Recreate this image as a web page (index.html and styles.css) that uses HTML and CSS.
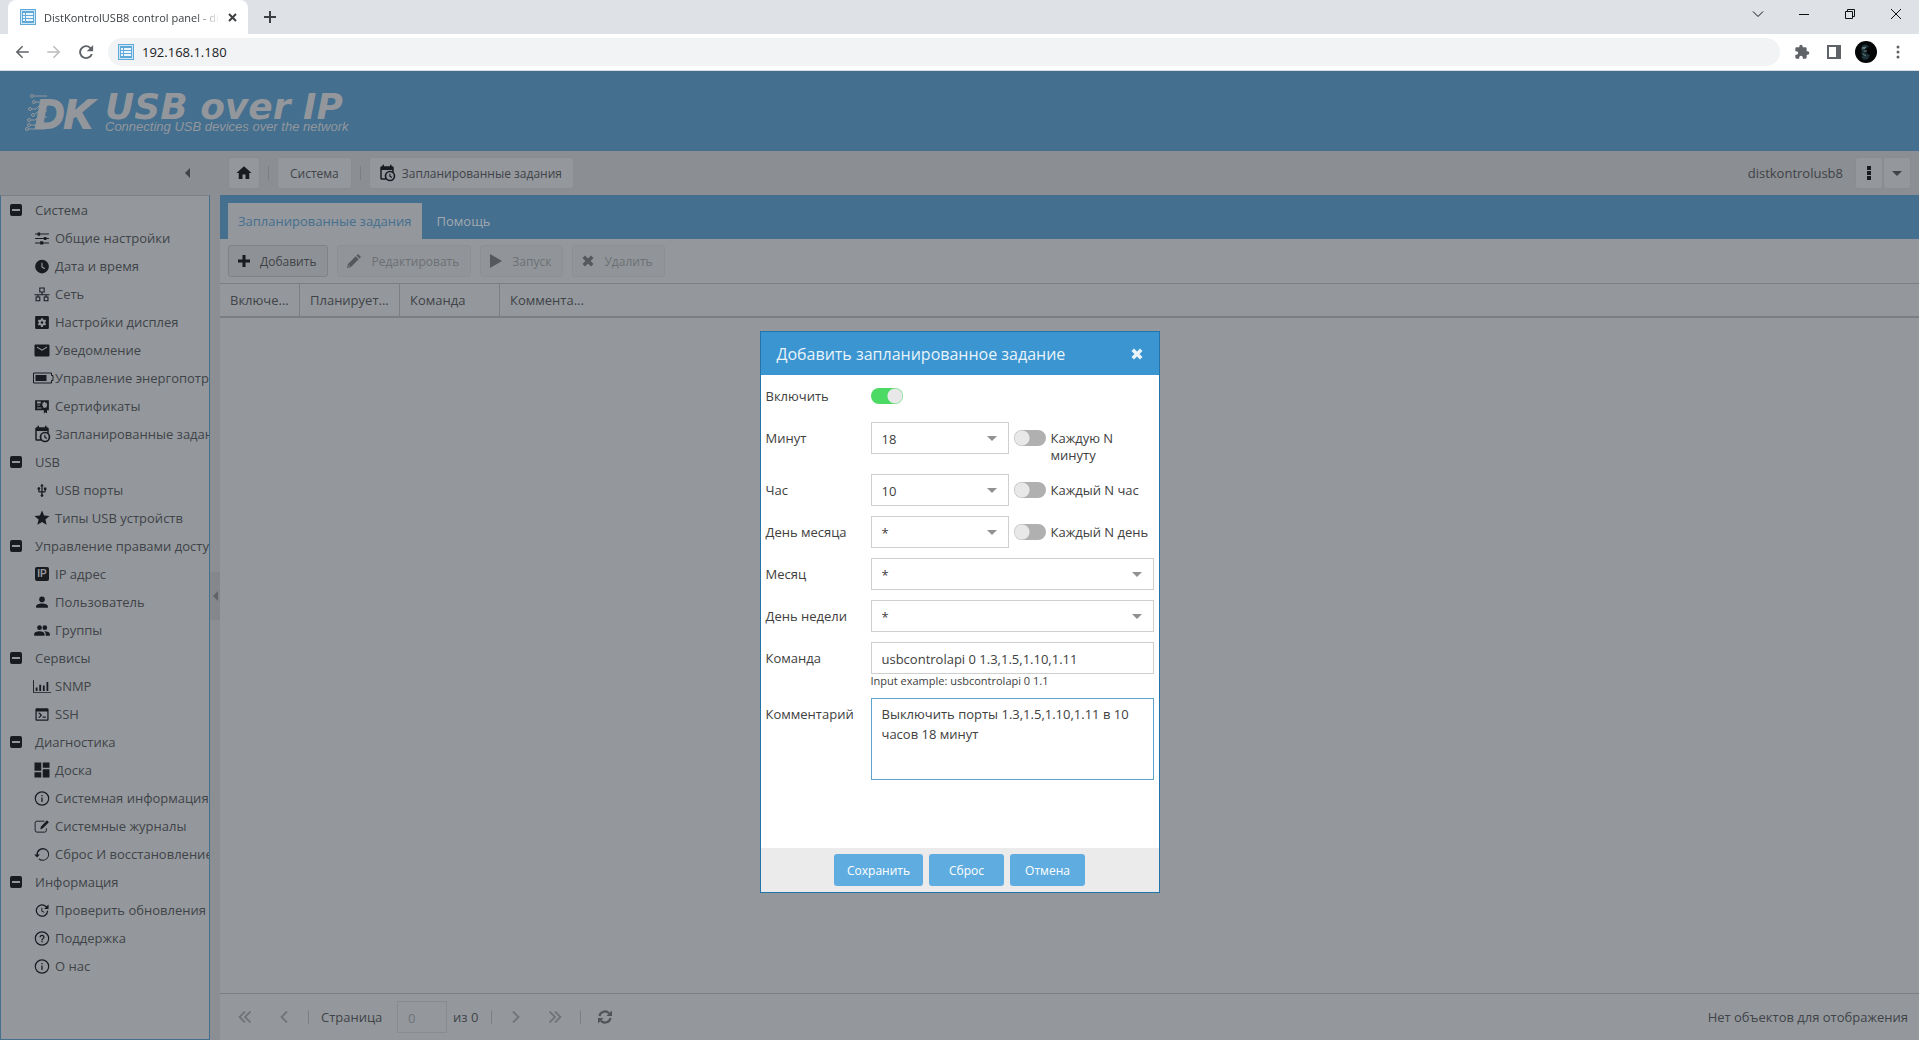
FILE: index.html
```html
<!DOCTYPE html>
<html lang="ru">
<head>
<meta charset="utf-8">
<meta name="viewport" content="width=device-width, initial-scale=1">
<title>DistKontrolUSB8 control panel</title>
<link rel="stylesheet" href="styles.css">
</head>
<body>
<svg class="sprite" aria-hidden="true">
  <symbol id="favicon" viewBox="0 0 16 16"><path fill="#5fa9da" d="M0 0h16v16H0z"/><path fill="#cfe6f6" d="M1 1h14v1H1zM1 14h14v1H1zM1 2h1v12H1zM14 2h1v12h-1z"/><path fill="#eaf5fc" d="M3 4h2v2H3zM6 4h7v2H6zM3 7h2v2H3zM6 7h7v2H6zM3 10h2v2H3zM6 10h7v2H6z"/></symbol>
  <symbol id="arrow-left" viewBox="0 0 24 24"><path d="M21 11v2H7.500l6 6-1.420 1.420L3.660 12l8.420-8.420L13.500 5l-6 6z"/></symbol>
  <symbol id="reload" viewBox="0 0 24 24"><path d="M18.500 5.500A9.200 9.200 0 1 0 21 14.500h-2.600A6.700 6.700 0 1 1 16.700 7.200L13 11h8.500V2.500z"/></symbol>
  <symbol id="puzzle" viewBox="0 0 24 24"><path d="M20.500 11H19V7a2 2 0 0 0-2-2h-4V3.500a2.500 2.500 0 0 0-5 0V5H4a2 2 0 0 0-2 2v3.800h1.500a2.700 2.700 0 0 1 0 5.400H2V20a2 2 0 0 0 2 2h3.800v-1.500a2.700 2.700 0 0 1 5.400 0V22H17a2 2 0 0 0 2-2v-4h1.500a2.500 2.500 0 0 0 0-5z"/></symbol>
  <symbol id="minus-box" viewBox="0 0 12 12"><path fill-rule="evenodd" d="M2 0h8a2 2 0 0 1 2 2v8a2 2 0 0 1-2 2H2a2 2 0 0 1-2-2V2a2 2 0 0 1 2-2zM2 5v2h8V5z"/></symbol>
  <symbol id="tune" viewBox="0 0 24 24"><path d="M1 4h22v1.600H1zM1 11.200h22v1.600H1zM1 18.400h22V20H1z"/><path d="M5 2.500h4v5H5zM15 9.500h4v5h-4zM9 16.500h5v5H9z"/></symbol>
  <symbol id="clock" viewBox="0 0 24 24"><path fill-rule="evenodd" d="M12 1a11 11 0 1 0 0 22 11 11 0 0 0 0-22zm4.200 15.200L11 13V6h1.800v6.100l4.200 2.500z"/></symbol>
  <symbol id="lan" viewBox="0 0 24 24"><path fill="none" stroke="currentColor" stroke-width="1.700" d="M8.500 1.500h7V8h-7zM2.500 16h6v6h-6zM15.500 16h6v6h-6zM12 8v4.500M0 12.500h24M5.500 12.500V16M18.500 12.500V16"/></symbol>
  <symbol id="display" viewBox="0 0 24 24"><path fill-rule="evenodd" d="M3 1.500h18a2 2 0 0 1 2 2v17a2 2 0 0 1-2 2H3a2 2 0 0 1-2-2v-17c0-1.100.9-2 2-2zm7.500 3.500-.4 2.200-1.300.7-2-.8-1.600 2.700 1.700 1.400v1.600l-1.700 1.400 1.600 2.700 2-.8 1.300.7.400 2.200h3l.4-2.200 1.300-.7 2 .8 1.600-2.700-1.700-1.400v-1.600l1.700-1.400-1.600-2.700-2 .8-1.300-.7-.4-2.200zM12 10a2 2 0 1 1 0 4 2 2 0 0 1 0-4z"/></symbol>
  <symbol id="mail" viewBox="0 0 24 24"><path fill-rule="evenodd" d="M2 2.500h20a2 2 0 0 1 2 2v15a2 2 0 0 1-2 2H2a2 2 0 0 1-2-2v-15c0-1.100.9-2 2-2zm2 3v2l8 5 8-5v-2l-8 5z"/></symbol>
  <symbol id="battery" viewBox="0 0 21 12"><path fill="none" stroke="currentColor" d="M.5 1h18v2.500h1.500v5h-1.500V11H.5z"/><path d="M2.500 3h11v6h-11z"/></symbol>
  <symbol id="cert" viewBox="0 0 24 24"><path fill-rule="evenodd" d="M1 2h22v16h-3v5l-2.500-2-2.500 2v-5H1zm3 2v3h6V4zm0 5v1.500h5V9zm0 4.500V15h7v-1.500zM16 4l-1 1.500h-2V8l-1 1.500 1.500 1.500V13.500H15l1 1 1.500-1H19.500v-2l1-2-1-1.500V6h-2z"/></symbol>
  <symbol id="calendar" viewBox="0 0 24 24"><path d="M15 13h1.500v2.820l2.440 1.410-.75 1.300L15 16.690zM19 8H5v11h4.670A7 7 0 0 1 19 9.670zM5 21a2 2 0 0 1-2-2V5c0-1.110.89-2 2-2h1V1h2v2h8V1h2v2h1a2 2 0 0 1 2 2v6.100A7 7 0 0 1 11.100 21zm11-9.850a4.850 4.850 0 1 0 0 9.700 4.850 4.850 0 0 0 0-9.700z"/></symbol>
  <symbol id="usb" viewBox="0 0 24 24"><path d="M15 7v4h1v2h-3V5h2l-3-4-3 4h2v8H8v-2.070a2.200 2.200 0 1 0-2 0V13a2 2 0 0 0 2 2h3v3.050a2.200 2.200 0 1 0 2 0V15h3a2 2 0 0 0 2-2v-2h1V7z"/></symbol>
  <symbol id="star" viewBox="0 0 24 24"><path d="M12 17.270 18.180 21l-1.640-7.030L22 9.240l-7.190-.62L12 2 9.190 8.620 2 9.240l5.450 4.730L5.820 21z"/></symbol>
  <symbol id="user" viewBox="0 0 24 24"><circle cx="12" cy="7" r="4.500"/><path d="M12 13.500c-5 0-9.500 1.800-9.500 4.500v2.500h19V18c0-2.700-4.500-4.500-9.500-4.500z"/></symbol>
  <symbol id="users" viewBox="0 0 24 24"><circle cx="8" cy="7.500" r="3.800"/><circle cx="16.500" cy="7.500" r="3.800"/><path d="M8 13c-4.500 0-8.500 1.600-8.500 4.200v3.300h16.500v-3.300C16 14.600 12 13 8 13zM16.500 13l-1.300.1c1.500.9 2.700 2.300 2.700 4.100v3.300h6.600v-3.300c0-2.600-4-4.200-8-4.200z"/></symbol>
  <symbol id="chart" viewBox="0 0 20 14"><path d="M1 0v13h19v1H0V0zM3 8h2v4H3zM7 5h2v7H7zM11 6h2v6h-2zM15 2h2v10h-2z"/></symbol>
  <symbol id="console" viewBox="0 0 24 24"><path d="M20.500 20V7h-17v13zm0-18a2 2 0 0 1 2 2v16a2 2 0 0 1-2 2h-17a2 2 0 0 1-2-2V4c0-1.110.9-2 2-2zm-7.500 15v-2h5v2zm-3.420-4L5.570 9H8.400l3.300 3.300a1 1 0 0 1 0 1.420L8.420 17H5.590z"/></symbol>
  <symbol id="board" viewBox="0 0 24 24"><path d="M13 2v7h9V2M13 22h9V11h-9M2 22h9v-7H2M2 13h9V2H2z"/></symbol>
  <symbol id="info" viewBox="0 0 24 24"><circle cx="12" cy="12" r="10.700" fill="none" stroke="currentColor" stroke-width="1.900"/><path d="M11 6.500h2v2h-2zM11 10.500h2v7h-2z"/></symbol>
  <symbol id="help" viewBox="0 0 24 24"><circle cx="12" cy="12" r="10.700" fill="none" stroke="currentColor" stroke-width="1.900"/><path d="M11 18h2v-2h-2zM12 6a4 4 0 0 0-4 4h2a2 2 0 1 1 4 0c0 2-3 1.750-3 5h2c0-2.250 3-2.500 3-5a4 4 0 0 0-4-4z"/></symbol>
  <symbol id="edit" viewBox="0 0 24 24"><path fill="none" stroke="currentColor" stroke-width="1.500" d="M16 3.500H4a3 3 0 0 0-3 3V18a3 3 0 0 0 3 3h12a3 3 0 0 0 3-3v-3"/><path d="m20 2 3 3-10 10-4 1.500L10.500 12z"/></symbol>
  <symbol id="restore" viewBox="0 0 24 24"><path d="M13.500 1.500A10.300 10.300 0 0 0 3.100 12H-.5l4.600 4.800L8.700 12H5.200a8.300 8.300 0 1 1 2.600 6.200l-1.400 1.500A10.300 10.300 0 1 0 13.500 1.500z"/></symbol>
  <symbol id="update" viewBox="0 0 24 24"><path d="M22.500 9.500h-7.200l2.700-2.700A8 8 0 1 0 20 12.500h2A10 10 0 1 1 19.300 5.300l3.200-3zM12.500 7.500v4.750L16 14.330l-.72 1.210L11 13V7.500z"/></symbol>
  <symbol id="home" viewBox="0 0 24 24"><path d="M10 20v-6h4v6h5v-8h3L12 3 2 12h3v8z"/></symbol>
  <symbol id="plus" viewBox="0 0 12 12"><path d="M4.500 0h3v4.500H12v3H7.500V12h-3V7.500H0v-3h4.500z"/></symbol>
  <symbol id="pencil" viewBox="0 0 14 14"><path fill-rule="evenodd" d="M11 0l3 3-1.500 1.500-3-3zM8.700 2.300l3 3L4 13l-4 1 1-4zM2 11l-.6 1.700L3.200 12.100z"/></symbol>
  <symbol id="play" viewBox="0 0 12 14"><path d="M0 0l12 7-12 7z"/></symbol>
  <symbol id="cross" viewBox="0 0 12 12"><path d="M3 .5 6 3.500l3-3L11.500 3l-3 3 3 3L9 11.500l-3-3-3 3L.5 9l3-3-3-3z"/></symbol>
  <symbol id="dots" viewBox="0 0 4 14"><path d="M0 0h4v4H0zM0 5h4v4H0zM0 10h4v4H0z"/></symbol>
  <symbol id="down" viewBox="0 0 10 5"><path d="M0 0h10L5 5z"/></symbol>
  <symbol id="left" viewBox="0 0 5 10"><path d="M5 0v10L0 5z"/></symbol>
  <symbol id="chev" viewBox="0 0 8 12"><path fill="none" stroke="currentColor" stroke-width="1.800" d="M7 .5 1.500 6 7 11.500"/></symbol>
  <symbol id="chev2" viewBox="0 0 13 12"><path fill="none" stroke="currentColor" stroke-width="1.800" d="M7 .5 1.500 6 7 11.500M12.500.5 7 6l5.500 5.500"/></symbol>
  <symbol id="sync" viewBox="0 0 14 14"><path fill="none" stroke="currentColor" stroke-width="2.200" d="M1.500 6A5.500 5.500 0 0 1 11 3.300M12.500 8A5.500 5.500 0 0 1 3 10.700"/><path d="M14 .5V6H8.500zM0 13.500V8h5.500z"/></symbol>
</svg>

<div class="browser">
  <div class="tabstrip">
    <div class="browser-tab">
      <svg class="i16"><use href="#favicon"/></svg>
      <span class="browser-title">DistKontrolUSB8 control panel - di</span>
      <button class="plain" aria-label="Close tab"><svg class="i9" viewBox="0 0 9 9"><path d="M1 1l7 7M8 1 1 8" fill="none" stroke="#3c4043" stroke-width="2"/></svg></button>
    </div>
    <button class="plain new-tab" aria-label="New tab"><svg class="i12" viewBox="0 0 12 12"><path d="M6 0v12M0 6h12" stroke="#3c4043" stroke-width="2"/></svg></button>
    <div class="window-controls">
      <button class="plain" aria-label="Search tabs"><svg viewBox="0 0 10 10"><path d="M0 2.500l5 5 5-5"/></svg></button>
      <button class="plain" aria-label="Minimize"><svg viewBox="0 0 10 10"><path d="M0 5.500h10"/></svg></button>
      <button class="plain" aria-label="Restore"><svg viewBox="0 0 10 10"><path d="M.5 2.500h7v7h-7zM2.500 2V.5h7v7H8"/></svg></button>
      <button class="plain" aria-label="Close"><svg viewBox="0 0 10 10"><path d="M0 0l10 10M10 0 0 10"/></svg></button>
    </div>
  </div>
  <div class="navbar">
    <button class="plain nav" aria-label="Back"><svg class="i18"><use href="#arrow-left"/></svg></button>
    <button class="plain nav forward" aria-label="Forward"><svg class="i18"><use href="#arrow-left"/></svg></button>
    <button class="plain nav" aria-label="Reload"><svg class="i18"><use href="#reload"/></svg></button>
    <div class="omnibox"><svg class="i16"><use href="#favicon"/></svg><input aria-label="Address" value="192.168.1.180"></div>
    <button class="plain ext" aria-label="Extensions"><svg class="i16"><use href="#puzzle"/></svg></button>
    <button class="plain ext" aria-label="Side panel"><svg class="i14" viewBox="0 0 14 14"><path fill-rule="evenodd" d="M0 0h14v14H0zm2 2v10h7V2z"/></svg></button>
    <button class="plain ext" aria-label="Profile"><svg class="i22" viewBox="0 0 22 22"><circle cx="11" cy="11" r="11" fill="#050607"/><path d="M7 5c2-2 5-2 7 1l-3 1 1 1-3 1 3 2-2 1 5 2-2 4-4 1-3-3 2-1-2-2 1-2-1-3z" fill="#1d333b"/><path d="M7 7l4-1-2 2zM9 10l3 0M8 13l3 2" stroke="#6f807e" fill="none"/></svg></button>
    <button class="plain ext" aria-label="Menu"><svg class="i14" viewBox="0 0 14 14"><circle cx="7" cy="2" r="1.500"/><circle cx="7" cy="7" r="1.500"/><circle cx="7" cy="12" r="1.500"/></svg></button>
  </div>
</div>

<div class="app">
  <header class="banner">
    <svg class="logo-mark" viewBox="0 0 68 40" role="img" aria-label="DK">
      <g fill="none" stroke="#93979c"><path d="M9 3h13M11 9h4l4 3h4M7 16h4l3-3h8M10 21l4-3h8M6 27h4l4-3h8M6 32h5l3-2h6M4 36h16"/><circle cx="7" cy="3" r="1.500"/><circle cx="9" cy="9" r="1.500"/><circle cx="5" cy="16" r="1.500"/><circle cx="8" cy="22" r="1.500"/><circle cx="4" cy="27" r="1.500"/><circle cx="4" cy="32" r="1.500"/><circle cx="2" cy="36" r="1.500"/></g>
      <text x="10" y="35" fill="#93979c" stroke="#93979c" stroke-width="2" font-family="Liberation Sans" font-weight="700" font-style="italic" font-size="40">DK</text>
    </svg>
    <div class="logo-text"><span class="logo-name">USB over IP</span><span class="logo-sub">Connecting USB devices over the network</span></div>
  </header>

  <div class="columns">
    <aside class="side">
      <div class="side-head"><button class="plain" aria-label="Свернуть"><svg class="left"><use href="#left"/></svg></button></div>
      <nav class="tree">
        <button class="group"><svg><use href="#minus-box"/></svg>Система</button>
        <a href="#"><svg><use href="#tune"/></svg>Общие настройки</a>
        <a href="#"><svg><use href="#clock"/></svg>Дата и время</a>
        <a href="#"><svg><use href="#lan"/></svg>Сеть</a>
        <a href="#"><svg><use href="#display"/></svg>Настройки дисплея</a>
        <a href="#"><svg><use href="#mail"/></svg>Уведомление</a>
        <a href="#"><svg class="wide"><use href="#battery"/></svg>Управление энергопотреблением</a>
        <a href="#"><svg><use href="#cert"/></svg>Сертификаты</a>
        <a href="#"><svg class="full"><use href="#calendar"/></svg>Запланированные задания</a>
        <button class="group"><svg><use href="#minus-box"/></svg>USB</button>
        <a href="#"><svg><use href="#usb"/></svg>USB порты</a>
        <a href="#"><svg class="full"><use href="#star"/></svg>Типы USB устройств</a>
        <button class="group"><svg><use href="#minus-box"/></svg>Управление правами доступа</button>
        <a href="#"><span class="ip-badge">IP</span>IP адрес</a>
        <a href="#"><svg><use href="#user"/></svg>Пользователь</a>
        <a href="#"><svg><use href="#users"/></svg>Группы</a>
        <button class="group"><svg><use href="#minus-box"/></svg>Сервисы</button>
        <a href="#"><svg><use href="#chart"/></svg>SNMP</a>
        <a href="#"><svg><use href="#console"/></svg>SSH</a>
        <button class="group"><svg><use href="#minus-box"/></svg>Диагностика</button>
        <a href="#"><svg class="full"><use href="#board"/></svg>Доска</a>
        <a href="#"><svg><use href="#info"/></svg>Системная информация</a>
        <a href="#"><svg><use href="#edit"/></svg>Системные журналы</a>
        <a href="#"><svg><use href="#restore"/></svg>Сброс И восстановление</a>
        <button class="group"><svg><use href="#minus-box"/></svg>Информация</button>
        <a href="#"><svg><use href="#update"/></svg>Проверить обновления</a>
        <a href="#"><svg><use href="#help"/></svg>Поддержка</a>
        <a href="#"><svg><use href="#info"/></svg>О нас</a>
      </nav>
    </aside>
    <div class="splitter"><button class="plain" aria-label="Свернуть панель"><svg class="left"><use href="#left"/></svg></button></div>

    <main class="main">
      <div class="crumbs">
        <button class="crumb home" aria-label="Домой"><svg class="i18"><use href="#home"/></svg></button>
        <i class="sep"></i>
        <button class="crumb">Система</button>
        <i class="sep"></i>
        <button class="crumb with-icon"><svg class="i18"><use href="#calendar"/></svg>Запланированные задания</button>
        <span class="host">distkontrolusb8</span>
        <div class="split"><button class="crumb" aria-label="Меню"><svg class="dots"><use href="#dots"/></svg></button><button class="crumb arrow" aria-label="Развернуть"><svg class="down"><use href="#down"/></svg></button></div>
      </div>
      <div class="tabs"><button class="tab active">Запланированные задания</button><button class="tab">Помощь</button></div>
      <div class="tools">
        <button class="tool"><svg class="i12"><use href="#plus"/></svg>Добавить</button>
        <button class="tool" disabled><svg class="i14"><use href="#pencil"/></svg>Редактировать</button>
        <button class="tool" disabled><svg class="play"><use href="#play"/></svg>Запуск</button>
        <button class="tool" disabled><svg class="i12"><use href="#cross"/></svg>Удалить</button>
      </div>
      <div class="grid">
        <table>
          <colgroup><col class="c80"><col class="c100"><col class="c100"><col></colgroup>
          <thead><tr><th>Включе...</th><th>Планирует...</th><th>Команда</th><th>Коммента...</th></tr></thead>
        </table>
      </div>
      <footer class="pager">
        <button class="plain" disabled aria-label="Первая"><svg class="chev2"><use href="#chev2"/></svg></button>
        <button class="plain" disabled aria-label="Предыдущая"><svg class="chev"><use href="#chev"/></svg></button>
        <i class="sep"></i>
        <label for="page">Страница</label>
        <input id="page" value="0" disabled>
        <span class="of">из 0</span>
        <i class="sep"></i>
        <button class="plain flip" disabled aria-label="Следующая"><svg class="chev"><use href="#chev"/></svg></button>
        <button class="plain flip" disabled aria-label="Последняя"><svg class="chev2"><use href="#chev2"/></svg></button>
        <i class="sep"></i>
        <button class="plain refresh" aria-label="Обновить"><svg class="i14"><use href="#sync"/></svg></button>
        <span class="empty">Нет объектов для отображения</span>
      </footer>
    </main>
  </div>

  <div class="overlay">
    <form class="dialog" role="dialog" aria-labelledby="dlg">
      <div class="dialog-head"><h2 id="dlg">Добавить запланированное задание</h2><button type="button" class="plain" aria-label="Закрыть"><svg class="i12"><use href="#cross"/></svg></button></div>
      <div class="dialog-body">
        <div class="field"><label for="on">Включить</label><div class="control"><input id="on" class="switch" type="checkbox" checked></div></div>
        <div class="field"><label for="min">Минут</label><div class="control"><span class="combo short"><select id="min"><option>18</option></select></span><input id="nmin" class="switch" type="checkbox"><label for="nmin">Каждую N минуту</label></div></div>
        <div class="field"><label for="hour">Час</label><div class="control"><span class="combo short"><select id="hour"><option>10</option></select></span><input id="nhour" class="switch" type="checkbox"><label for="nhour">Каждый N час</label></div></div>
        <div class="field"><label for="day">День месяца</label><div class="control"><span class="combo short"><select id="day"><option>*</option></select></span><input id="nday" class="switch" type="checkbox"><label for="nday">Каждый N день</label></div></div>
        <div class="field"><label for="month">Месяц</label><div class="control"><span class="combo"><select id="month"><option>*</option></select></span></div></div>
        <div class="field"><label for="week">День недели</label><div class="control"><span class="combo"><select id="week"><option>*</option></select></span></div></div>
        <div class="field"><label for="cmd">Команда</label><div><input id="cmd" class="box" value="usbcontrolapi 0 1.3,1.5,1.10,1.11"><div class="hint">Input example: usbcontrolapi 0 1.1</div></div></div>
        <div class="field"><label for="note">Комментарий</label><textarea id="note" class="box">Выключить порты 1.3,1.5,1.10,1.11 в 10 часов 18 минут</textarea></div>
      </div>
      <div class="dialog-foot"><button type="button" class="primary">Сохранить</button><button type="button" class="primary">Сброс</button><button type="button" class="primary">Отмена</button></div>
    </form>
  </div>
</div>
</body>
</html>
```
FILE: styles.css
```css
:root {
  --blue: #446f8f;
  --panel: #94989d;
  --bar: #8b8e92;
  --line: #7b7f84;
  --text: #404347;
  --ink: #181b20;
  --faint: #707478;
}
* { box-sizing: border-box; }
body {
  margin: 0;
  min-height: 100vh;
  display: flex;
  flex-direction: column;
  font: 13px/17px "Open Sans", "Noto Sans", sans-serif;
  color: var(--text);
  background: var(--panel);
}
button, input, select, textarea { font: inherit; color: inherit; margin: 0; }
button { cursor: pointer; }
svg { display: block; flex: none; fill: currentColor; }
.sprite { position: absolute; width: 0; height: 0; }
.plain { border: 0; padding: 0; background: none; display: flex; align-items: center; justify-content: center; }
.i9 { width: 9px; height: 9px; }
.i12 { width: 12px; height: 12px; }
.i14 { width: 14px; height: 14px; }
.i16 { width: 16px; height: 16px; }
.i18 { width: 18px; height: 18px; }
.i22 { width: 22px; height: 22px; }
.left { width: 5px; height: 10px; }
.down { width: 10px; height: 5px; }
.dots { width: 4px; height: 14px; }
.play { width: 12px; height: 14px; }
.chev { width: 8px; height: 12px; }
.chev2 { width: 13px; height: 12px; }

/* Browser chrome */
.browser { background: #fff; color: #5f6368; border-bottom: 1px solid #d8dce0; }
.tabstrip { display: flex; height: 34px; padding-left: 8px; background: #dee1e6; }
.browser-tab { display: flex; align-items: center; width: 240px; padding: 0 11px 0 12px; background: #fff; border-radius: 8px 8px 0 0; }
.browser-title {
  flex: 1; margin: 0 8px; overflow: hidden; white-space: nowrap; font-size: 11px; color: #3c4043;
  mask-image: linear-gradient(to right, #000 86%, transparent);
}
.new-tab { width: 44px; }
.window-controls { display: flex; margin-left: auto; padding-bottom: 6px; }
.window-controls button { width: 46px; }
.window-controls svg { width: 10px; height: 10px; fill: none; stroke: #111; overflow: visible; }
.navbar { display: flex; align-items: center; height: 36px; padding: 0 5px 0 6px; }
.nav { width: 32px; height: 28px; }
.forward { color: #babcbe; transform: scaleX(-1); }
.omnibox { flex: 1; display: flex; align-items: center; gap: 8px; height: 28px; margin: 0 6px; padding: 0 10px; border-radius: 14px; background: #f1f3f4; }
.omnibox input { flex: 1; border: 0; padding: 0; background: none; color: #202124; outline: 0; }
.ext { width: 32px; height: 28px; }

/* Application frame */
.app { position: relative; flex: 1; display: flex; flex-direction: column; }
.banner { display: flex; align-items: flex-start; height: 80px; padding: 22px 25px 0; background: var(--blue); color: #93979c; }
.logo-mark { width: 68px; height: 40px; overflow: visible; }
.logo-text { display: flex; flex-direction: column; margin-left: 12px; white-space: nowrap; }
.logo-name { font: italic 700 36px/28px "DejaVu Sans", sans-serif; }
.logo-sub { font: italic 13px/12px "Liberation Sans", sans-serif; }
.columns { flex: 1; display: grid; grid-template-columns: 210px 10px minmax(0, 1fr); }
.side { display: flex; flex-direction: column; min-width: 0; background: var(--panel); }
.side-head { display: flex; align-items: center; justify-content: flex-end; height: 44px; padding: 0 20px 0 0; background: var(--bar); color: var(--text); }
.tree { flex: 1; border: 1px solid var(--blue); border-top-color: var(--line); overflow: hidden; }
.tree a, .group { display: flex; align-items: center; width: 100%; height: 28px; padding: 0 0 0 32px; border: 0; background: none; color: inherit; text-decoration: none; white-space: nowrap; text-align: left; overflow: hidden; }
.tree a svg { width: 18px; height: 15px; margin-right: 4px; color: var(--ink); }
.tree a svg.full { height: 18px; }
.tree a svg.wide { width: 21px; height: 12px; margin-right: 1px; }
.ip-badge { width: 14px; height: 14px; margin: 0 6px 0 2px; border-radius: 2px; background: var(--ink); color: var(--panel); font: 700 10px/14px "Liberation Sans", sans-serif; text-align: center; }
.tree .group { padding-left: 9px; }
.group svg { width: 12px; height: 12px; margin-right: 13px; color: var(--ink); }
.splitter { display: flex; align-items: center; background: var(--bar); }
.splitter button { width: 10px; height: 48px; background: #84878b; color: #606367; }
.main { display: flex; flex-direction: column; min-width: 0; }

.crumbs { display: flex; align-items: center; gap: 8px; height: 44px; padding: 0 8px; background: var(--bar); }
.crumb { display: flex; align-items: center; justify-content: center; height: 32px; padding: 0 12px; border: 1px solid #898d91; border-radius: 3px; background: var(--panel); font-size: 12px; white-space: nowrap; }
.home { width: 32px; padding: 0; }
.with-icon { gap: 6px; padding: 0 11px 0 8px; }
.crumb svg { color: var(--ink); }
.sep { width: 1px; height: 14px; background: var(--line); }
.host { margin-left: auto; padding-right: 4px; }
.split { display: flex; }
.split .crumb { width: 28px; padding: 0; }
.crumb .down { color: var(--text); }
.tabs { display: flex; align-items: flex-end; height: 44px; padding: 0 8px; background: var(--blue); }
.tab { height: 36px; padding: 0 10px; border: 0; background: none; color: #a3a9af; }
.tab.active { background: var(--panel); color: var(--blue); }
.tab + .tab { padding: 0 15px; }
.tools { display: flex; align-items: center; gap: 9px; height: 44px; padding: 0 8px; }
.tool { display: flex; align-items: center; gap: 10px; height: 32px; padding: 0 11px 0 9px; border: 1px solid #7f8387; border-radius: 3px; background: #8e9196; font-size: 12px; }
.tool svg { color: var(--ink); }
.tool:disabled { color: #6c7074; border-color: #8c9094; background: #919599; }
.tool:disabled svg { color: #55585c; }
.grid { flex: 1; border-top: 1px solid var(--line); }
table { width: 100%; table-layout: fixed; border-collapse: separate; border-spacing: 0; }
.c80 { width: 80px; }
.c100 { width: 100px; }
th { height: 34px; padding: 0 10px; border-bottom: 2px solid var(--line); border-right: 1px solid var(--line); text-align: left; font-weight: 400; white-space: nowrap; }
th:last-child { border-right: 0; }
.pager { display: flex; align-items: center; gap: 8px; height: 47px; padding: 0 11px 0 8px; border-top: 1px solid var(--line); }
.pager .plain { width: 32px; height: 32px; color: #707478; }
.pager .refresh { color: #505357; }
.pager .flip { transform: scaleX(-1); }
.pager label { width: 68px; margin-left: 4px; }
.pager input { width: 50px; height: 32px; padding: 2px 10px 0; border: 1px solid #888c90; background: none; color: var(--faint); }
.pager .of { width: 30px; margin-left: -2px; }
.empty { margin-left: auto; }

/* Dialog */
.overlay { position: absolute; inset: 0; display: flex; align-items: flex-start; justify-content: center; padding-top: 260px; }
.dialog { display: flex; flex-direction: column; width: 400px; min-height: 562px; border: 1px solid #2474ac; background: #fff; color: #404040; }
.dialog-head { display: flex; align-items: center; justify-content: space-between; height: 43px; padding: 0 16px; background: #3a95d0; color: #e9f3fa; }
h2 { margin: 0; font-size: 16px; font-weight: 400; line-height: 22px; }
.dialog-body { flex: 1; display: flex; flex-direction: column; gap: 10px; padding: 5px; }
.field { display: grid; grid-template-columns: 105px minmax(0, 1fr); align-items: start; }
.field label { padding-top: 8px; }
.control { display: flex; align-items: flex-start; gap: 5px; min-height: 32px; }
.combo { position: relative; flex: 1; }
.short { flex: 0 0 138px; }
.combo::after { content: ""; position: absolute; right: 12px; top: 14px; border: 5px solid transparent; border-top-color: #919191; border-bottom: 0; pointer-events: none; }
select, .box { display: block; width: 100%; height: 32px; padding: 2px 10px 0; border: 1px solid #cfcfcf; border-radius: 0; background: #fff; outline: 0; appearance: none; }
textarea.box { height: 82px; padding: 5px 10px; border-color: #5fa2cd; line-height: 20px; resize: none; }
.hint { font-size: 11px; line-height: 14px; }
.switch { appearance: none; flex: none; width: 32px; height: 16px; margin: 8px 0 0; border-radius: 8px; background: radial-gradient(circle at 8px 8px, #e8e8e8 7px, transparent 8px) #b0b0b0; }
.switch:checked { background: radial-gradient(circle at 24px 8px, #e8e8e8 7px, transparent 8px) #4cd964; }
.dialog-foot { display: flex; align-items: center; justify-content: center; gap: 6px; height: 44px; background: #ebebeb; }
.primary { min-width: 75px; height: 32px; padding: 0 13px; border: 0; border-radius: 3px; background: #5fade0; color: #fff; font-size: 12px; }
```
